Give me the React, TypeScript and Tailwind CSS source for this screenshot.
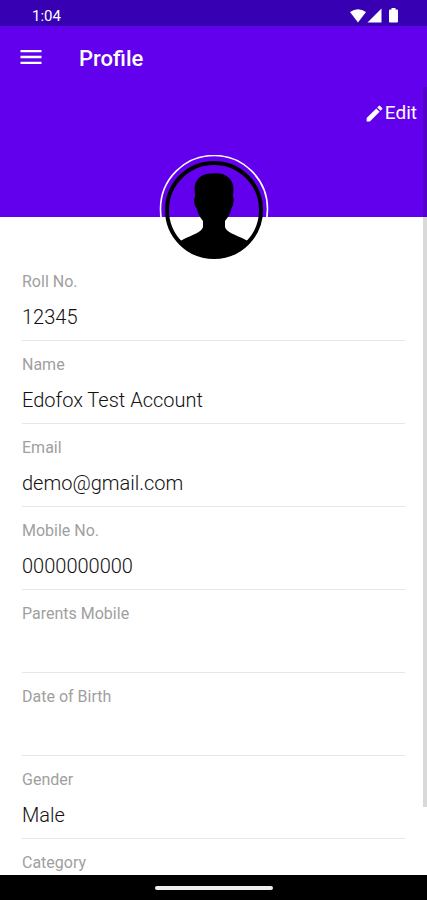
import { MdEdit, MdMenu } from "react-icons/md";

const fields = [
  { label: "Roll No.", value: "12345" },
  { label: "Name", value: "Edofox Test Account" },
  { label: "Email", value: "demo@gmail.com" },
  { label: "Mobile No.", value: "0000000000" },
  { label: "Parents Mobile", value: "" },
  { label: "Date of Birth", value: "" },
  { label: "Gender", value: "Male" },
  { label: "Category", value: "" },
];

function StatusBar() {
  return (
    <div className="flex h-[26px] shrink-0 items-center justify-between bg-[#3700b3] pt-[5px] pr-[27px] pl-8 text-[15px] leading-5 text-white">
      <span>1:04</span>
      <svg width="50" height="16" viewBox="0 0 50 16" fill="currentColor" aria-hidden="true">
        <path d="M0 4Q8 -1.400 16 4L8 14.500Z" />
        <path d="M31.500 0.500V14.500H17.500Z" />
        <path d="M41.500 0H45.500V1.500H47Q48 1.500 48 2.500V13.500Q48 14.500 47 14.500H40Q39 14.500 39 13.500V2.500Q39 1.500 40 1.500H41.500Z" />
      </svg>
    </div>
  );
}

function Avatar() {
  return (
    <svg
      className="absolute top-full left-1/2 -mt-[62px] -translate-x-1/2"
      width="110"
      height="110"
      viewBox="0 0 110 110"
      role="img"
      aria-label="Profile photo"
    >
      <defs>
        <clipPath id="face">
          <circle cx="55" cy="55" r="48" />
        </clipPath>
      </defs>
      <circle cx="55" cy="54" r="53.500" fill="none" stroke="#fff" strokeWidth="1.600" />
      <circle cx="55" cy="55" r="47" fill="none" stroke="#000" strokeWidth="4" />
      <path
        clipPath="url(#face)"
        d="M54 18.500C65 17 74 23 74.500 33L74 42C75.500 43 74.500 51 72.500 53C71.500 59 69 62 66 66V72C67 77 77 80 85 84Q90 86 93 90V110H17V90Q20 86 25 84C33 80 43 77 44 72V66C41 62 39 59 37.500 53C35 51 34.500 43 36 42L35.500 33C36 24 43 18 54 18.500Z"
      />
    </svg>
  );
}

export default function App() {
  return (
    <div className="flex h-screen flex-col overflow-hidden bg-white font-[Roboto,sans-serif]">
      <StatusBar />

      <header className="flex h-[61px] shrink-0 items-center bg-[#6200ee] pl-[17px] text-white">
        <button type="button" aria-label="Open menu">
          <MdMenu size={28} />
        </button>
        <h1 className="pt-1 pl-[34px] text-[22px] leading-7 font-medium">Profile</h1>
      </header>

      <div className="relative flex min-h-0 flex-1 flex-col">
        <main className="min-h-0 flex-1 overflow-y-auto [scrollbar-width:none]">
          <div className="relative flex h-[130px] items-start justify-end bg-[#6200ee] pt-[14px] pr-[10px]">
            <button type="button" className="flex items-center text-[19px] leading-6 text-white">
              <MdEdit size={21} />
              Edit
            </button>
            <Avatar />
          </div>

          <dl className="px-[22px] pt-[41px]">
            {fields.map((field) => (
              <div key={field.label} className="border-b border-[#e6e6e6] pt-[14px] pb-[11px]">
                <dt className="text-base leading-5 text-[#a0a0a0]">{field.label}</dt>
                <dd className="mt-[13px] h-6 text-xl leading-6 font-light text-[#111]">
                  {field.value}
                </dd>
              </div>
            ))}
          </dl>
        </main>

        {/* scroll position */}
        <div className="absolute top-0 right-0 h-[720px] w-1 bg-black/15" />
      </div>

      <footer className="flex h-[25px] shrink-0 items-center justify-center bg-black">
        <div className="h-1 w-[118px] rounded-full bg-[#eee]" />
      </footer>
    </div>
  );
}
